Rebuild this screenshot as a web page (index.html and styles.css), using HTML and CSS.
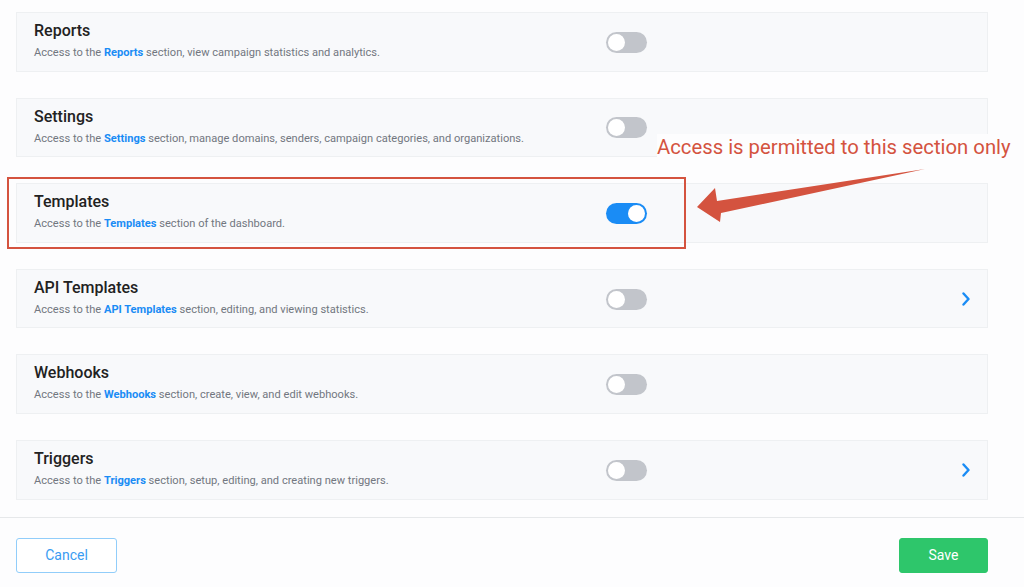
FILE: index.html
```html
<!DOCTYPE html>
<html lang="en">
<head>
<meta charset="utf-8">
<title>Permissions</title>
<link rel="stylesheet" href="styles.css">
</head>
<body>
<div class="page">
  <div class="list">
    <div class="card">
      <div class="text">
        <div class="title">Reports</div>
        <div class="desc">Access to the <b class="link">Reports</b> section, view campaign statistics and analytics.</div>
      </div>
      <span class="toggle"><span class="knob"></span></span>
      <span></span>
    </div>
    <div class="card">
      <div class="text">
        <div class="title">Settings</div>
        <div class="desc">Access to the <b class="link">Settings</b> section, manage domains, senders, campaign categories, and organizations.</div>
      </div>
      <span class="toggle"><span class="knob"></span></span>
      <span></span>
    </div>
    <div class="card">
      <div class="text">
        <div class="title">Templates</div>
        <div class="desc">Access to the <b class="link">Templates</b> section of the dashboard.</div>
      </div>
      <span class="toggle on"><span class="knob"></span></span>
      <span></span>
    </div>
    <div class="card">
      <div class="text">
        <div class="title">API Templates</div>
        <div class="desc">Access to the <b class="link">API Templates</b> section, editing, and viewing statistics.</div>
      </div>
      <span class="toggle"><span class="knob"></span></span>
      <svg class="chev" width="10" height="14" viewBox="0 0 10 14"><path d="M2.5 1.5 L7.5 7 L2.5 12.5" fill="none" stroke="#1a8cf5" stroke-width="2.4" stroke-linecap="round" stroke-linejoin="round"/></svg>
    </div>
    <div class="card">
      <div class="text">
        <div class="title">Webhooks</div>
        <div class="desc">Access to the <b class="link">Webhooks</b> section, create, view, and edit webhooks.</div>
      </div>
      <span class="toggle"><span class="knob"></span></span>
      <span></span>
    </div>
    <div class="card">
      <div class="text">
        <div class="title">Triggers</div>
        <div class="desc">Access to the <b class="link">Triggers</b> section, setup, editing, and creating new triggers.</div>
      </div>
      <span class="toggle"><span class="knob"></span></span>
      <svg class="chev" width="10" height="14" viewBox="0 0 10 14"><path d="M2.5 1.5 L7.5 7 L2.5 12.5" fill="none" stroke="#1a8cf5" stroke-width="2.4" stroke-linecap="round" stroke-linejoin="round"/></svg>
    </div>
  </div>
  <div class="footer">
    <button class="btn cancel">Cancel</button>
    <button class="btn save">Save</button>
  </div>

  <div class="highlight"></div>
  <div class="note">Access is permitted to this section only</div>
  <svg class="arrow" width="240" height="60" viewBox="690 165 240 60">
    <polygon points="697,207 715,188 717,201 925,169 721,213 720,222" fill="#d4533f"/>
  </svg>
</div>
</body>
</html>
```
FILE: styles.css
```css
* { box-sizing: border-box; }
html, body { margin: 0; padding: 0; }
body {
  background: #fdfdfe;
  font-family: Roboto, "Liberation Sans", Arial, sans-serif;
  color: #222;
}
.page {
  position: relative;
  width: 1024px;
  height: 587px;
  overflow: hidden;
}
.list {
  display: flex;
  flex-direction: column;
  gap: 26px;
  padding: 12px 36px 0 16px;
}
.card {
  height: 59.6px;
  border: 1px solid #eef0f2;
  background: #f8f9fb;
  display: grid;
  grid-template-columns: 572px 41px 1fr 10px;
  align-items: center;
  padding: 0 16px 0 17px;
}
.text {
  align-self: start;
  padding-top: 8px;
}
.title {
  font-size: 16px;
  line-height: 20px;
  font-weight: 500;
  color: #222;
}
.desc {
  margin-top: 4px;
  font-size: 11.1px;
  line-height: 15px;
  color: #727780;
}
.link {
  color: #1a8cf5;
  font-weight: 700;
}
.toggle {
  position: relative;
  width: 41px;
  height: 21px;
  border-radius: 11px;
  background: #c2c5cb;
  margin-top: 1px;
}
.toggle .knob {
  position: absolute;
  top: 2px;
  left: 2px;
  width: 17px;
  height: 17px;
  border-radius: 50%;
  background: #fff;
}
.toggle.on { background: #1a8cf5; }
.toggle.on .knob { left: 22px; }
.chev { grid-column: 4; margin-top: 1px; }
.footer {
  margin-top: 17px;
  border-top: 1px solid #e6e8ea;
  display: flex;
  justify-content: space-between;
  align-items: center;
  padding: 20px 36px 0 16px;
}
.btn {
  font-family: Roboto, "Liberation Sans", Arial, sans-serif;
  font-size: 14px;
  height: 35px;
  border-radius: 3px;
  cursor: pointer;
}
.cancel {
  width: 101px;
  background: #fff;
  border: 1px solid #91cdfa;
  color: #3a9cf2;
}
.save {
  width: 89px;
  background: #2ec66b;
  border: 1px solid #2ec66b;
  color: #fff;
}
.highlight {
  position: absolute;
  left: 7px;
  top: 177px;
  width: 679px;
  height: 72px;
  border: 2px solid #d4533f;
}
.note {
  position: absolute;
  left: 657px;
  top: 134px;
  font-family: Roboto, "Liberation Sans", sans-serif;
  font-size: 20.3px;
  line-height: 26px;
  color: #d4533f;
  white-space: nowrap;
  background: #fdfdfe;
}
.arrow {
  position: absolute;
  left: 690px;
  top: 165px;
}
```
